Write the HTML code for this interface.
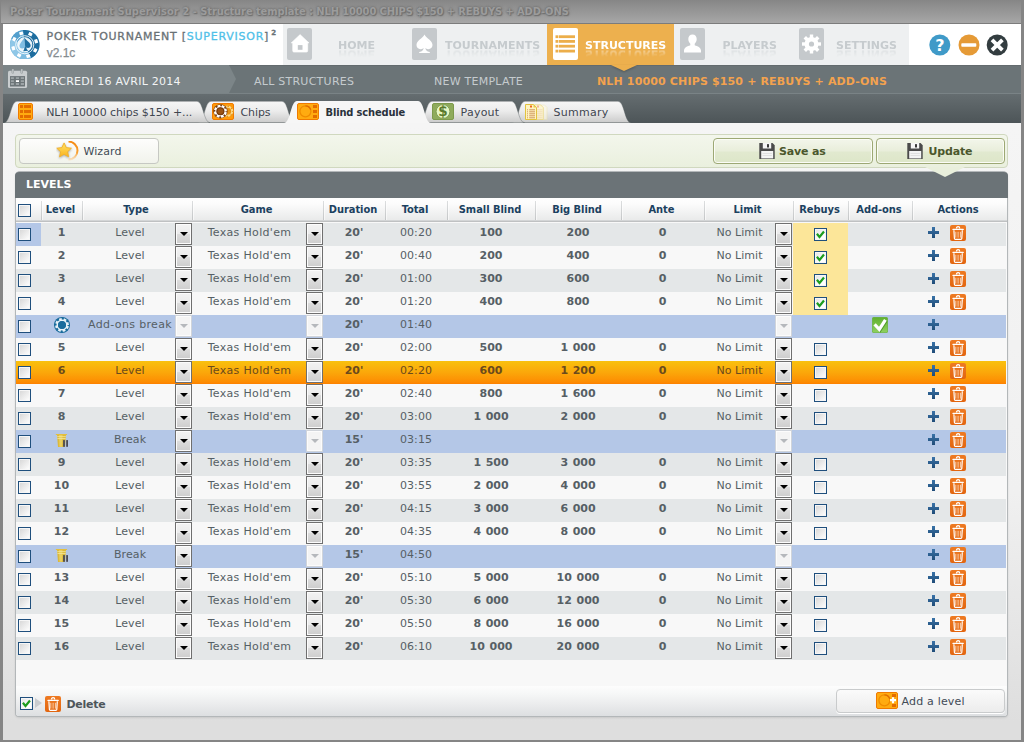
<!DOCTYPE html>
<html lang="fr">
<head>
<meta charset="utf-8">
<title>Poker Tournament Supervisor 2 - Structure template</title>
<style>
html,body{margin:0;padding:0}
body{width:1024px;height:742px;overflow:hidden;background:#8c8c8c;font-family:"DejaVu Sans","Liberation Sans",sans-serif;font-size:11px;color:#565f65}
#win{position:absolute;left:0;top:0;width:1024px;height:742px;background:#858585;overflow:hidden}
#win:before{content:"";position:absolute;left:3px;top:123px;width:1018px;height:617px;background:linear-gradient(#f5f5f5 0,#f0f0f0 60%,#dedede 97%)}
#titlebar{position:absolute;left:1px;top:0;width:1020px;height:23px;border-bottom:1px solid #7c7c7c;background:linear-gradient(#868686,#a7a7a7);border-radius:3px 3px 0 0}
#titlebar span{position:absolute;left:9px;top:4.500px;font-family:"DejaVu Sans Condensed","DejaVu Sans",sans-serif;font-weight:bold;font-size:11px;line-height:14px;color:#9c9c9c;white-space:pre;letter-spacing:-.08px;text-shadow:0 0 2px #6a6a6a,0 0 3px #757575,1px 1px 1px #707070}
#titlebar .t1{font-style:normal;letter-spacing:.12px}
#header{z-index:3;position:absolute;left:3px;top:24px;width:1018px;height:41px;background:#fff}
#logo{position:absolute;left:7px;top:5.800px;width:29.500px;height:29.500px}
#brand{position:absolute;left:43.500px;top:6px;font-size:11px;line-height:14px;letter-spacing:.76px;color:#697175;white-space:pre;-webkit-text-stroke:.3px #697175}
#brand .sup{color:#4fc0e8;-webkit-text-stroke:.3px #4fc0e8}
#brand .two{font-size:7px;position:relative;top:-5px;margin-left:2px;letter-spacing:0}
#ver{position:absolute;left:43.700px;top:22px;font-family:"Liberation Sans",sans-serif;font-size:12px;line-height:15px;color:#858c90;letter-spacing:0;-webkit-text-stroke:.25px #858c90}
#nav{position:absolute;left:280px;top:0;width:626px;height:41px;background:#eef0f1}
.nv{position:absolute;top:0;height:41px;width:110px}
.nv .ib{position:absolute;left:0;top:4px;width:25px;height:32px;border-radius:2px;background:#c5c9cc}
.nv .ib svg{display:block;width:25px;height:32px}
.nv .nt{position:absolute;top:15px;font-weight:bold;font-size:11px;line-height:14px;color:#c6cbce;white-space:pre;-webkit-box-reflect:below -6.500px linear-gradient(transparent 25%,rgba(255,255,255,.45) 78%)}
.nv.act{background:#edb04e}
.nv.act .ib{background:#fff}
.nv.act .nt{color:#fff}
.nv.act .arrow{position:absolute;left:64px;bottom:-6px;width:0;height:0;border:13px solid transparent;border-bottom:0;border-top:6px solid #edb04e;filter:drop-shadow(0 1px 1px rgba(0,0,0,.25))}
#winbtns{position:absolute;left:922.500px;top:7.500px;width:84px;height:26px}
#crumbs{position:absolute;left:3px;top:65px;width:1018px;height:28px;background:#6b7477;border-bottom:1px solid #7a8386;box-shadow:inset 0 1px 0 #636b6e}
#datecrumb{position:absolute;left:0;top:0;width:226px;height:28px;background:#7c8588}
#datecrumb:after{content:"";position:absolute;left:226px;top:0;border:solid transparent;border-width:14px 0 14px 7.700px;border-left-color:#7c8588}
#cal{position:absolute;left:5px;top:4px;width:20px;height:20px}
.cr{position:absolute;top:10px;font-size:11px;line-height:14px;color:#c5cbce;white-space:pre;letter-spacing:.25px}
.cr.date{color:#f2f4f5}
.cr.cur{color:#f3a24e;font-weight:bold;letter-spacing:.15px}
#tabbar{position:absolute;left:3px;top:94px;width:1018px;height:29px;background:linear-gradient(#656d70,#4d5558)}
#tabs{position:absolute;left:0;top:0}
.ti{position:absolute}
.tl{position:absolute;top:12px;font-size:11px;line-height:14px;color:#3f4650;white-space:pre;letter-spacing:-.08px}
.tl.act{font-family:"DejaVu Sans Condensed","DejaVu Sans",sans-serif;font-weight:bold;color:#2a323c;letter-spacing:-.15px;font-size:11px}
#content{position:absolute;left:0;top:123px;width:1024px;height:617px}
#toolbar{position:absolute;left:15px;top:11px;width:991px;height:32px;border:1px solid #d0d8bf;border-radius:4px;background:linear-gradient(#f3f6ec,#eaf0de)}
.btn{position:absolute;box-sizing:border-box;border-radius:3px;white-space:pre}
.btn.wiz{left:3px;top:3px;width:140px;height:26px;border-radius:4px;border:1px solid #c6c8c3;background:linear-gradient(#fdfdfc,#f1f3ec)}
.btn.wiz svg{position:absolute;left:36px;top:2px}
.btn.wiz span{position:absolute;left:63.400px;top:5.500px;line-height:14px;color:#424b56;letter-spacing:.13px}
.btn.grn{top:3px;height:26px;border:1px solid #9da874;border-radius:4px;box-shadow:inset 0 0 0 1px #fbfcf7;background:linear-gradient(#f3f6eb 0,#e9eedb 48%,#e1e9cf 56%,#dde6c8 100%)}
.btn.grn .fl{position:absolute;top:4px}
.btn.grn b{position:absolute;top:5.500px;line-height:14px;color:#4b572c;font-size:11px;letter-spacing:-.18px}
#toolbar .tbarrow{position:absolute;left:909px;top:32px;width:0;height:0;border:solid transparent;border-width:10px 20px 0 20px;border-top-color:#e9efdc;z-index:5}
#panel{position:absolute;left:16px;top:49px;width:991px;height:544px;background:#f8f8f8;border-radius:4px 4px 3px 3px;box-shadow:0 0 0 1px #b3b7b9,0 1px 3px rgba(0,0,0,.2)}
#ptitle{position:absolute;left:-1px;top:0;width:993px;height:26px;background:#6b7377;border-radius:4px 4px 0 0;color:#fff;font-weight:bold;font-size:11px;line-height:25px;text-indent:11px}
#thead{position:absolute;left:0;top:26px;width:991px;height:23px;background:linear-gradient(#fefefe 0,#fcfcfc 25%,#e8e9e9 100%);border-bottom:1px solid #bfc1c2;box-shadow:inset 0 -1px 0 #d3d5d6}
#thead .h{position:absolute;top:0;height:23px;line-height:24px;text-align:center;color:#1b4160;letter-spacing:-.03px;padding-right:2px;font-family:"DejaVu Sans Condensed","DejaVu Sans",sans-serif;font-size:11px;box-sizing:border-box;background:linear-gradient(#dcdedf,#c4c6c7) no-repeat 0 3px/1px 19px,linear-gradient(#fff,#f6f6f6) no-repeat 1px 3px/1px 19px}
.cb{position:absolute;box-sizing:border-box;width:13px;height:13px;border:1px solid #1f4f7d;background:linear-gradient(135deg,#dadada 12%,#fbfbfb 88%);box-shadow:inset 0 0 0 1px #f6f6f6}
.cb svg{position:absolute;left:-1px;top:-1px;width:13px;height:13px}
.hcb{left:2px;top:6px}
.row{position:absolute;left:0;width:990px;height:23px}
.row.odd{background:#e4e7e8}
.row.even{background:#f8f8f8}
.row.brk{background:#b4c7e7}
.row.sel{background:linear-gradient(#f9c10e 0,#fba70a 50%,#fd8c02 92%,#fd7f00 100%)}
.row .firstsel{position:absolute;left:0;top:0;width:25px;height:23px;background:#b4c7e7}
.row .rowcb{left:2px;top:5px}
.row .c{position:absolute;top:0;height:23px;line-height:19px;text-align:center;white-space:pre}
.row span.c{letter-spacing:.1px}
.row span.c.game{letter-spacing:.33px}
.row span.c.lim{letter-spacing:.03px}
.row b.c{word-spacing:.8px}
.row.sel .c{color:#6b4a1c}
.c.lvl{left:25px;width:41px}
.c.typ{left:66px;width:96px}
.c.game{left:177px;width:113px}
.c.dur{left:307px;width:62px}
.c.tot{left:369px;width:62px}
.c.sb{left:431px;width:88px}
.c.bb{left:519px;width:86px}
.c.ante{left:605px;width:83px}
.c.lim{left:688px;width:71px}
.lvlico{position:absolute;left:38px;top:2px;width:16px;height:16px}
.dd{position:absolute;top:0;width:17px;height:22px;box-sizing:border-box;border:1px solid #6f6f6f;background:linear-gradient(#f3f3f3 0,#ebebeb 48%,#dcdcdc 52%,#cdcdcd 100%);box-shadow:inset 0 0 0 1px #fcfcfc}
.dd i{position:absolute;left:3.500px;top:8px;width:0;height:0;border:solid transparent;border-width:4px 4px 0 4px;border-top-color:#000}
.dd.dis{border-color:#d0d4da;background:#f4f4f4}
.dd.dis i{border-top-color:#b5b8bc}
.reb{position:absolute;left:777px;top:0;width:55px;height:23px;background:#fce699}
.rebcb{left:798px;top:5px}
.addon{position:absolute;left:856px;top:2px;width:16px;height:16px}
.plus{position:absolute;left:912px;top:4px;width:12px;height:12px}
.trash{position:absolute;left:934px;top:2px;width:16px;height:16px}
#pfoot{position:absolute;left:0;top:500px;width:991px;height:44px;background:linear-gradient(#f8f8f8 0,#f8f8f8 13.500px,#fdfdfd 14px,#f6f7f7 22px,#eaebec 33px,#dddfe1 100%);border-radius:0 0 3px 3px}
.fcb{left:4px;top:25px}
#pfoot .tri{position:absolute;left:18.500px;top:26px;width:0;height:0;border:solid transparent;border-width:5px 0 5px 7px;border-left-color:#c9cccf}
.ftrash{position:absolute;left:29px;top:24px;width:16px;height:16px}
#pfoot .del{position:absolute;left:50.400px;top:25.500px;line-height:14px;color:#4e565b;font-size:11px;letter-spacing:-.23px}
.btn.add{left:819.500px;top:17px;width:169.500px;height:24px;border-radius:4px;border:1px solid #c9cbcc;background:linear-gradient(#fbfbfb,#ececec);box-shadow:0 1px 0 #fff}
.btn.add svg{position:absolute;left:39.500px;top:2px}
.btn.add span{position:absolute;left:65px;top:4.500px;line-height:14px;color:#424b56;letter-spacing:.19px}

.cb.on{background:linear-gradient(135deg,#e6e6e6 10%,#fff 70%)}

</style>
</head>
<body>
<svg width="0" height="0" style="position:absolute">
<defs>
<linearGradient id="g-orange" x1="0" y1="0" x2="0" y2="1"><stop offset="0" stop-color="#ee7a22"/><stop offset="1" stop-color="#e2650f"/></linearGradient>
<linearGradient id="g-blue" x1="0" y1="0" x2="0" y2="1"><stop offset="0" stop-color="#3a73a8"/><stop offset="1" stop-color="#1f4c78"/></linearGradient>
<linearGradient id="g-green" x1="0" y1="0" x2="0" y2="1"><stop offset="0" stop-color="#60b02c"/><stop offset="1" stop-color="#8fd162"/></linearGradient>
<symbol id="i-trash" viewBox="0 0 16 16">
<rect x="0" y="0" width="16" height="16" rx="2" fill="url(#g-orange)"/>
<path d="M6.500 3.400q0-1.700 1.600-1.700t1.600 1.700" fill="none" stroke="#fff" stroke-width="1.300"/>
<path d="M3 4.400h10.200" fill="none" stroke="#fff" stroke-width="1.300" stroke-linecap="round"/>
<path d="M3.900 5.300l.5 8.200q.05.900.9.900h5.600q.85 0 .9-.9l.5-8.200" fill="none" stroke="#fff" stroke-width="1.200" stroke-linejoin="round"/>
<path d="M5.800 6.800v5.900M8.100 6.800v5.900M10.400 6.800v5.900" stroke="#f9cfae" stroke-width="1" fill="none"/>
</symbol>
<symbol id="i-plus" viewBox="0 0 12 12">
<path d="M4 0h3v4h4v3h-4v4h-3v-4h-4v-3h4z" fill="url(#g-blue)"/>
</symbol>
<symbol id="i-tick" viewBox="0 0 13 13">
<path d="M2.900 5.700L5.500 8.900L10 3.500" fill="none" stroke="#1d9d1d" stroke-width="2.200"/>
</symbol>
<symbol id="i-greencheck" viewBox="0 0 16 16">
<rect x=".3" y=".3" width="15.400" height="15.400" rx="1.500" fill="url(#g-green)" stroke="#5cab2a" stroke-width=".6"/>
<path d="M3.400 8.200L8.100 13.200L14.200 3.700" fill="none" stroke="#3f8a1a" stroke-opacity=".7" stroke-width="3"/>
<path d="M2.600 7.400L7.300 12.400L13.400 2.900" fill="none" stroke="#fff" stroke-width="3.200"/>
</symbol>
<symbol id="i-chipblue" viewBox="0 0 16 16">
<circle cx="8" cy="8" r="8" fill="#176a9b"/>
<circle cx="8" cy="8" r="5.500" fill="none" stroke="#e9f2f8" stroke-width="3"/>
<circle cx="8" cy="8" r="6.500" fill="none" stroke="#176a9b" stroke-width="2.100" stroke-dasharray="2.200 2.905" stroke-dashoffset="1.100"/>
<circle cx="8" cy="8" r="3.800" fill="#1a6c9d"/>
</symbol>
<symbol id="i-floppy" viewBox="0 0 16 16">
<path d="M.3 0h13.200l2.200 2.200v13.800h-15.400z" fill="#4b4b4b"/>
<rect x="3.800" y="0" width="8.400" height="5.500" fill="#f6f6f6"/><rect x="8" y="1" width="2" height="3.500" rx=".6" fill="#3a3a3a"/>
<rect x="2.200" y="8" width="12" height="7.400" fill="#f4f4f4"/><path d="M3.500 10.500h9.400M3.500 12.500h9.400" stroke="#dcdcdc" stroke-width=".8"/>
</symbol>
<symbol id="i-break" viewBox="0 0 16 16">
<path d="M3 2.800h9l-1 12.200h-7z" fill="#dcb93a"/>
<path d="M5 3h3.500l-.4 11.800h-2.600z" fill="#ecd468" opacity=".8"/>
<path d="M3.200 4.600h8.600M3.400 6.500h8.300" stroke="#f3e69a" stroke-width=".8"/>
<path d="M2.300 2.450h10.300" stroke="#e3bf3e" stroke-width="1.100" stroke-linecap="round"/>
<rect x="9.100" y="8.100" width="1.800" height="6.700" fill="#4a4a54"/><rect x="12.200" y="8.100" width="1.800" height="6.700" fill="#4a4a54"/>
</symbol>
</defs>
</svg>

<div id="win">
<div id="titlebar"><span><i class="t1">Poker Tournament Supervisor 2</i> - Structure template : NLH 10000 CHIPS $150 + REBUYS + ADD-ONS</span></div>

<div id="header">
  <svg id="logo" viewBox="0 0 30 30"><circle cx="15" cy="15" r="15" fill="#5fa9d3"/><path d="M15 15L13.17 0.11A15 15 0 0 1 21.34 28.59z" fill="#1e6d9f"/><path d="M15 15L21.34 28.59A15 15 0 0 1 9.87 29.10z" fill="#7dbce1"/><path d="M15 15L9.87 29.10A15 15 0 0 1 1.41 8.66z" fill="#8fc7e7"/><path d="M15 15L1.41 8.66A15 15 0 0 1 13.17 0.11z" fill="#539fcd"/><rect x="-1.650" y="-1.900" width="3.300" height="3.800" rx=".4" fill="#fff" transform="translate(26.57 11.46) rotate(-17)"/><rect x="-1.650" y="-1.900" width="3.300" height="3.800" rx=".4" fill="#fff" transform="translate(25.68 20.68) rotate(28)"/><rect x="-1.650" y="-1.900" width="3.300" height="3.800" rx=".4" fill="#fff" transform="translate(18.54 26.57) rotate(73)"/><rect x="-1.650" y="-1.900" width="3.300" height="3.800" rx=".4" fill="#fff" transform="translate(9.32 25.68) rotate(118)"/><rect x="-1.650" y="-1.900" width="3.300" height="3.800" rx=".4" fill="#fff" transform="translate(3.43 18.54) rotate(163)"/><rect x="-1.650" y="-1.900" width="3.300" height="3.800" rx=".4" fill="#fff" transform="translate(4.32 9.32) rotate(208)"/><rect x="-1.650" y="-1.900" width="3.300" height="3.800" rx=".4" fill="#fff" transform="translate(11.46 3.43) rotate(253)"/><rect x="-1.650" y="-1.900" width="3.300" height="3.800" rx=".4" fill="#fff" transform="translate(20.68 4.32) rotate(298)"/><circle cx="15" cy="15" r="9.200" fill="none" stroke="#fff" stroke-width=".9"/><circle cx="15" cy="15" r="7.200" fill="#eaf5fb" stroke="#fff" stroke-width=".9"/><g transform="translate(15.200 14.600) scale(1.320) rotate(-6) translate(-14.600 -14)"><path d="M14.600 8.600c-1.300 2.400-4.300 4.200-4.300 6.500c0 1.700 1.900 2.500 3.500 1.500c.4-.25.600-.5.800-.8z" fill="#7fbde3"/><path d="M14.600 8.600c1.300 2.400 4.300 4.200 4.300 6.500c0 1.700-1.900 2.500-3.500 1.500c-.1.900.4 1.800 1.300 2.600h-4.200c.9-.8 1.400-1.700 1.300-2.600c.4-.25.600-.5.800-.8z" fill="#1e6d9f"/></g></svg>
  <div id="brand">POKER TOURNAMENT <span class="br">[</span><span class="sup">SUPERVISOR</span><span class="br">]</span><b class="two">2</b></div>
  <div id="ver">v2.1c</div>

  <div id="nav">
    <div class="nv" style="left:4px"><span class="ib"><svg viewBox="0 0 25 32"><path d="M13.100 6.600L22 14.900H20.700V22.800Q20.700 24.100 19.400 24.100H7Q5.700 24.100 5.700 22.800V14.900H4.200z" fill="#fff" stroke="#fff" stroke-width=".6" stroke-linejoin="round"/><rect x="10.800" y="17.100" width="4.700" height="4.700" fill="#c5c9cc"/></svg></span><span class="nt" style="left:51px">HOME</span></div>
    <div class="nv" style="left:129px"><span class="ib"><svg viewBox="0 0 25 32"><path d="M12.500 6.600C14.500 10.500 20.500 12.800 20.500 17.100C20.500 20.900 16.200 22.400 13.400 19.900C13.500 21.900 14.600 23.200 17.800 24V25H7.200V24C10.400 23.200 11.500 21.900 11.600 19.900C8.800 22.400 4.500 20.900 4.500 17.100C4.500 12.800 10.500 10.500 12.500 6.600z" fill="#fff"/></svg></span><span class="nt" style="left:33px">TOURNAMENTS</span></div>
    <div class="nv act" style="left:264px;width:127px"><span class="ib" style="left:6px"><svg viewBox="0 0 25 32"><g fill="#ecae4a"><rect x="2.500" y="7.3" width="2.500" height="2.800"/><rect x="5.600" y="7.3" width="16.400" height="2.800"/><rect x="2.500" y="12" width="2.500" height="2.800"/><rect x="5.600" y="12" width="16.400" height="2.800"/><rect x="2.500" y="16.8" width="2.500" height="2.800"/><rect x="5.600" y="16.8" width="16.400" height="2.800"/><rect x="2.500" y="21.7" width="2.500" height="2.800"/><rect x="5.600" y="21.7" width="16.400" height="2.800"/></g></svg></span><span class="nt" style="left:38px">STRUCTURES</span><i class="arrow"></i></div>
    <div class="nv" style="left:397px"><span class="ib"><svg viewBox="0 0 25 32"><path d="M12.500 6.500c2.600 0 4.200 1.900 4.200 4.500c0 2-0.900 3.800-2 4.700v1.600c3 1 6 2.200 6.300 5.200v2h-17v-2c.3-3 3.300-4.200 6.300-5.200v-1.600c-1.100-.9-2-2.700-2-4.700c0-2.600 1.600-4.500 4.200-4.500z" fill="#fff"/></svg></span><span class="nt" style="left:42.500px">PLAYERS</span></div>
    <div class="nv" style="left:516px"><span class="ib"><svg viewBox="0 0 25 32"><g transform="translate(12.500 16)"><circle r="5.200" fill="none" stroke="#fff" stroke-width="3.600"/><g stroke="#fff" stroke-width="3.400"><path d="M0-9.500V9.500"/><path d="M0-9.500V9.500" transform="rotate(45)"/><path d="M0-9.500V9.500" transform="rotate(90)"/><path d="M0-9.500V9.500" transform="rotate(135)"/></g><circle r="2.600" fill="#c5c9cc"/></g></svg></span><span class="nt" style="left:37px">SETTINGS</span></div>
  </div>

  <svg id="winbtns" viewBox="0 0 84 26">
    <circle cx="13.800" cy="13" r="10.500" fill="#3f9ac8"/><text x="13.800" y="18.800" text-anchor="middle" font-family="DejaVu Sans, sans-serif" font-weight="bold" font-size="16" fill="#fff">?</text>
    <circle cx="43" cy="13" r="10.500" fill="#e59a36"/><rect x="35.300" y="11.200" width="15" height="3.600" rx=".8" fill="#fff"/>
    <circle cx="71.200" cy="13" r="10.500" fill="#333d40"/><path d="M66 7.800l10.400 10.400M76.400 7.800l-10.400 10.400" stroke="#fff" stroke-width="3.800"/>
  </svg>
</div>

<div id="crumbs">
  <div id="datecrumb"></div>
  <svg id="cal" viewBox="0 0 20 20"><rect x="0" y="1.700" width="19.100" height="17.400" rx="1.600" fill="#c9cdcf"/><rect x="2" y="7.100" width="15" height="10.400" fill="#6d7578"/><rect x="2.9" y="8.2" width="3" height="1.8" fill="#9ca3a6"/><rect x="7.9" y="8.2" width="3.1" height="1.8" fill="#9ca3a6"/><rect x="12.8" y="8.2" width="3.2" height="1.8" fill="#9ca3a6"/><rect x="2.9" y="11.2" width="3" height="1.8" fill="#9ca3a6"/><rect x="7.9" y="11.2" width="3.1" height="1.8" fill="#fff"/><rect x="12.8" y="11.2" width="3.2" height="1.8" fill="#9ca3a6"/><rect x="2.9" y="14" width="3" height="2" fill="#9ca3a6"/><rect x="7.9" y="14" width="3.1" height="2" fill="#9ca3a6"/><rect x="12.8" y="14" width="3.2" height="2" fill="#9ca3a6"/><rect x="3.600" y="0" width="2.400" height="4.600" rx="1.100" fill="#8e9598"/><rect x="12.500" y="0" width="2.400" height="4.600" rx="1.100" fill="#8e9598"/><rect x="4.200" y="0" width="1.300" height="4" rx=".6" fill="#c3c8ca"/><rect x="13.100" y="0" width="1.300" height="4" rx=".6" fill="#c3c8ca"/></svg>
  <span class="cr date" style="left:31px">MERCREDI 16 AVRIL 2014</span>
  <span class="cr" style="left:251px">ALL STRUCTURES</span>
  <span class="cr" style="left:431px">NEW TEMPLATE</span>
  <span class="cr cur" style="left:594px">NLH 10000 CHIPS $150 + REBUYS + ADD-ONS</span>
</div>

<div id="tabbar">
  <svg id="tabs" width="1018" height="29" viewBox="0 0 1018 29"><defs><linearGradient id="tg" x1="0" y1="0" x2="0" y2="1"><stop offset="0" stop-color="#f6f6f6"/><stop offset=".45" stop-color="#ececec"/><stop offset="1" stop-color="#cbcbcb"/></linearGradient></defs><path d="M509 28.7C515.5 28.7 515.5 7.3 522 7.3H615C621.5 7.3 621.5 28.7 628 28.7V28.7H509z" fill="url(#tg)" stroke="#5a6265" stroke-opacity=".55" stroke-width=".7"/><path d="M416 28.7C422.5 28.7 422.5 7.3 429 7.3H508.5C515 7.3 515 28.7 521.5 28.7V28.7H416z" fill="url(#tg)" stroke="#5a6265" stroke-opacity=".55" stroke-width=".7"/><path d="M195 28.7C201.5 28.7 201.5 7.3 208 7.3H279C285.5 7.3 285.5 28.7 292 28.7V28.7H195z" fill="url(#tg)" stroke="#5a6265" stroke-opacity=".55" stroke-width=".7"/><path d="M1 28.7C7.5 28.7 7.5 7.3 14 7.3H194C200.5 7.3 200.5 28.7 207 28.7V28.7H1z" fill="url(#tg)" stroke="#5a6265" stroke-opacity=".55" stroke-width=".7"/><path d="M281 29C287.5 29 287.5 7 294 7H415C421.5 7 421.5 29 428 29V30H281z" fill="#f6f6f6"/></svg>
  <svg class="ti" style="left:15px;top:9px" width="15" height="17" viewBox="0 0 15 17"><rect x=".5" y=".5" width="14" height="16" rx="1.500" fill="#ffab10" stroke="#f07a00"/><g fill="#e36c00"><rect x="2" y="2" width="3" height="3"/><rect x="6" y="2" width="7" height="3"/><rect x="2" y="7" width="3" height="3"/><rect x="6" y="7" width="7" height="3"/><rect x="2" y="12" width="3" height="3"/><rect x="6" y="12" width="7" height="3"/></g></svg>
  <span class="tl" style="left:43.200px">NLH 10000 chips $150 +...</span>
  <svg class="ti" style="left:209px;top:9px" width="22" height="17" viewBox="0 0 22 17"><rect x=".5" y=".5" width="21" height="16" rx="1.500" fill="#ff9a0a" stroke="#f07a00"/><circle cx="15.600" cy="8.300" r="6" fill="#e8900e"/><circle cx="15.600" cy="8.300" r="4.600" fill="none" stroke="#fcd88a" stroke-width="2.200"/><circle cx="15.600" cy="8.300" r="5.100" fill="none" stroke="#e8900e" stroke-width="1.500" stroke-dasharray="1.500 2.505" stroke-dashoffset=".75"/><circle cx="8.400" cy="8.300" r="7.100" fill="#7a3d0c"/><circle cx="8.400" cy="8.300" r="5.300" fill="none" stroke="#fff" stroke-width="2.500"/><circle cx="8.400" cy="8.300" r="5.900" fill="none" stroke="#7a3d0c" stroke-width="1.700" stroke-dasharray="1.700 2.934" stroke-dashoffset=".85"/><circle cx="8.400" cy="8.300" r="3.400" fill="#9a5416" stroke="#6e350a" stroke-width=".8"/></svg>
  <span class="tl" style="left:237.500px">Chips</span>
  <svg class="ti" style="left:294px;top:9px" width="22" height="17" viewBox="0 0 22 17"><rect x=".5" y=".5" width="21" height="16" rx="1.500" fill="#ffab10" stroke="#f07a00"/><circle cx="8.400" cy="8.300" r="5.500" fill="#ffab10" stroke="#f08c00" stroke-width="1.300"/><path d="M8.400 2.800A5.500 5.500 0 0 1 13.700 6.800" fill="none" stroke="#e06c00" stroke-width="1.300"/><g fill="#e36c00"><rect x="16" y="2" width="4" height="3"/><rect x="16" y="7" width="4" height="3"/><rect x="16" y="12" width="4" height="3"/></g></svg>
  <span class="tl act" style="left:322.600px">Blind schedule</span>
  <svg class="ti" style="left:429px;top:9px" width="22" height="17" viewBox="0 0 22 17"><rect x=".5" y=".5" width="21" height="16" rx="1.500" fill="#8fab5c" stroke="#7d9a4c"/><circle cx="11" cy="8.500" r="6.900" fill="#e6f7c4" stroke="#7d9a4c" stroke-width=".9"/><text x="11" y="13.300" text-anchor="middle" font-family="DejaVu Sans, sans-serif" font-weight="bold" font-size="13.500" fill="#5a7a2c">$</text></svg>
  <span class="tl" style="left:457.500px;letter-spacing:.25px">Payout</span>
  <svg class="ti" style="left:522px;top:10px" width="24" height="16" viewBox="0 0 24 16"><path d="M15.500 1h4l2.500 2.500v12h-6.500z" fill="#fffbe6" stroke="#f1e6a8" stroke-width=".8" opacity=".55"/><path d="M9.500 .8h6l2.800 2.800v11.900h-8.800z" fill="#fff7cf" stroke="#ead784" stroke-width=".9" opacity=".85"/><path d="M12 5.800h5.500M12 7.800h5.500M12 9.800h5.500M12 11.800h5.500M12 13.800h5.500" stroke="#ecd3b0" stroke-width=".8"/><rect x="12" y="1.500" width="2" height="2" fill="#f3b29c"/><path d="M.5.500h8l3 3v12h-11z" fill="#fff4c0" stroke="#e2c23e"/><path d="M8.500.5v3h3z" fill="#e6c94e"/><g stroke="#cf9660" stroke-width="1"><path d="M2 5.800h1M2 7.800h1M2 9.800h1M2 11.800h1M2 13.800h1M4.200 5.800h5.800M4.200 7.800h5.800M4.200 9.800h5.800M4.200 11.800h5.800M4.200 13.800h5.800"/></g><rect x="5" y="1.500" width="2" height="2" fill="#ee6820"/></svg>
  <span class="tl" style="left:550.500px;letter-spacing:.28px">Summary</span>
</div>

<div id="content">
  <div id="toolbar">
    <div class="btn wiz"><svg width="24" height="20" viewBox="0 0 24 20"><defs><linearGradient id="sg" x1="0" y1="0" x2="0" y2="1"><stop offset="0" stop-color="#ffe468"/><stop offset="1" stop-color="#fbb21c"/></linearGradient><linearGradient id="ag" x1="0" y1="0" x2="0" y2="1"><stop offset="0" stop-color="#f58a12"/><stop offset=".6" stop-color="#f7a030"/><stop offset="1" stop-color="#fbc98a" stop-opacity=".5"/></linearGradient></defs><path d="M12.500 .6A9 9 0 0 1 12.500 18.600" fill="none" stroke="url(#ag)" stroke-width="2"/><path d="M8.10 1.90L10.27 6.61L15.42 7.22L11.62 10.74L12.63 15.83L8.10 13.30L3.57 15.83L4.58 10.74L0.78 7.22L5.93 6.61z" fill="url(#sg)" stroke="#f0b02a" stroke-width=".9" stroke-linejoin="round" style="filter:drop-shadow(0 1px 1px rgba(0,0,0,.3))"/></svg><span>Wizard</span></div>
    <div class="btn grn" style="left:697px;width:160px"><svg class="fl" style="left:45px" width="16" height="16" viewBox="0 0 16 16"><use href="#i-floppy"/></svg><b style="left:65px">Save as</b></div>
    <div class="btn grn" style="left:859.500px;width:129.500px"><svg class="fl" style="left:30.500px" width="16" height="16" viewBox="0 0 16 16"><use href="#i-floppy"/></svg><b style="left:52px">Update</b></div>
    <i class="tbarrow"></i>
  </div>

  <div id="panel">
    <div id="ptitle">LEVELS</div>
    <div id="thead">
      <span class="cb hcb"></span>
      <b class="h" style="left:25px;width:41px">Level</b>
      <b class="h" style="left:66px;width:110px">Type</b>
      <b class="h" style="left:176px;width:131px">Game</b>
      <b class="h" style="left:307px;width:62px">Duration</b>
      <b class="h" style="left:369px;width:62px">Total</b>
      <b class="h" style="left:431px;width:88px">Small Blind</b>
      <b class="h" style="left:519px;width:86px">Big Blind</b>
      <b class="h" style="left:605px;width:83px">Ante</b>
      <b class="h" style="left:688px;width:89px">Limit</b>
      <b class="h" style="left:777px;width:55px">Rebuys</b>
      <b class="h" style="left:832px;width:64px">Add-ons</b>
      <b class="h" style="left:896px;width:94px">Actions</b>
    </div>
<div class="row odd" style="top:51px"><span class="firstsel"></span><span class="cb rowcb"></span><b class="c lvl">1</b><span class="c typ">Level</span><span class="dd" style="left:159px"><i></i></span><span class="c game">Texas Hold'em</span><span class="dd" style="left:290px"><i></i></span><b class="c dur">20'</b><span class="c tot">00:20</span><b class="c sb">100</b><b class="c bb">200</b><b class="c ante">0</b><span class="c lim">No Limit</span><span class="dd" style="left:759px"><i></i></span><span class="reb"></span><span class="cb rebcb on"><svg viewBox="0 0 13 13"><use href="#i-tick"/></svg></span><svg class="plus" viewBox="0 0 12 12"><use href="#i-plus"/></svg><svg class="trash" viewBox="0 0 16 16"><use href="#i-trash"/></svg></div>
<div class="row even" style="top:74px"><span class="cb rowcb"></span><b class="c lvl">2</b><span class="c typ">Level</span><span class="dd" style="left:159px"><i></i></span><span class="c game">Texas Hold'em</span><span class="dd" style="left:290px"><i></i></span><b class="c dur">20'</b><span class="c tot">00:40</span><b class="c sb">200</b><b class="c bb">400</b><b class="c ante">0</b><span class="c lim">No Limit</span><span class="dd" style="left:759px"><i></i></span><span class="reb"></span><span class="cb rebcb on"><svg viewBox="0 0 13 13"><use href="#i-tick"/></svg></span><svg class="plus" viewBox="0 0 12 12"><use href="#i-plus"/></svg><svg class="trash" viewBox="0 0 16 16"><use href="#i-trash"/></svg></div>
<div class="row odd" style="top:97px"><span class="cb rowcb"></span><b class="c lvl">3</b><span class="c typ">Level</span><span class="dd" style="left:159px"><i></i></span><span class="c game">Texas Hold'em</span><span class="dd" style="left:290px"><i></i></span><b class="c dur">20'</b><span class="c tot">01:00</span><b class="c sb">300</b><b class="c bb">600</b><b class="c ante">0</b><span class="c lim">No Limit</span><span class="dd" style="left:759px"><i></i></span><span class="reb"></span><span class="cb rebcb on"><svg viewBox="0 0 13 13"><use href="#i-tick"/></svg></span><svg class="plus" viewBox="0 0 12 12"><use href="#i-plus"/></svg><svg class="trash" viewBox="0 0 16 16"><use href="#i-trash"/></svg></div>
<div class="row even" style="top:120px"><span class="cb rowcb"></span><b class="c lvl">4</b><span class="c typ">Level</span><span class="dd" style="left:159px"><i></i></span><span class="c game">Texas Hold'em</span><span class="dd" style="left:290px"><i></i></span><b class="c dur">20'</b><span class="c tot">01:20</span><b class="c sb">400</b><b class="c bb">800</b><b class="c ante">0</b><span class="c lim">No Limit</span><span class="dd" style="left:759px"><i></i></span><span class="reb"></span><span class="cb rebcb on"><svg viewBox="0 0 13 13"><use href="#i-tick"/></svg></span><svg class="plus" viewBox="0 0 12 12"><use href="#i-plus"/></svg><svg class="trash" viewBox="0 0 16 16"><use href="#i-trash"/></svg></div>
<div class="row odd brk" style="top:143px"><span class="cb rowcb"></span><svg class="lvlico" style="top:1.700px" viewBox="0 0 16 16"><use href="#i-chipblue"/></svg><span class="c typ" style="letter-spacing:.35px">Add-ons break</span><span class="dd dis" style="left:159px"><i></i></span><span class="dd dis" style="left:290px"><i></i></span><b class="c dur">20'</b><span class="c tot">01:40</span><span class="dd dis" style="left:759px"><i></i></span><svg class="addon" viewBox="0 0 16 16"><use href="#i-greencheck"/></svg><svg class="plus" viewBox="0 0 12 12"><use href="#i-plus"/></svg></div>
<div class="row even" style="top:166px"><span class="cb rowcb"></span><b class="c lvl">5</b><span class="c typ">Level</span><span class="dd" style="left:159px"><i></i></span><span class="c game">Texas Hold'em</span><span class="dd" style="left:290px"><i></i></span><b class="c dur">20'</b><span class="c tot">02:00</span><b class="c sb">500</b><b class="c bb">1 000</b><b class="c ante">0</b><span class="c lim">No Limit</span><span class="dd" style="left:759px"><i></i></span><span class="cb rebcb"></span><svg class="plus" viewBox="0 0 12 12"><use href="#i-plus"/></svg><svg class="trash" viewBox="0 0 16 16"><use href="#i-trash"/></svg></div>
<div class="row odd sel" style="top:189px"><span class="cb rowcb"></span><b class="c lvl">6</b><span class="c typ">Level</span><span class="dd" style="left:159px"><i></i></span><span class="c game">Texas Hold'em</span><span class="dd" style="left:290px"><i></i></span><b class="c dur">20'</b><span class="c tot">02:20</span><b class="c sb">600</b><b class="c bb">1 200</b><b class="c ante">0</b><span class="c lim">No Limit</span><span class="dd" style="left:759px"><i></i></span><span class="cb rebcb"></span><svg class="plus" viewBox="0 0 12 12"><use href="#i-plus"/></svg><svg class="trash" viewBox="0 0 16 16"><use href="#i-trash"/></svg></div>
<div class="row even" style="top:212px"><span class="cb rowcb"></span><b class="c lvl">7</b><span class="c typ">Level</span><span class="dd" style="left:159px"><i></i></span><span class="c game">Texas Hold'em</span><span class="dd" style="left:290px"><i></i></span><b class="c dur">20'</b><span class="c tot">02:40</span><b class="c sb">800</b><b class="c bb">1 600</b><b class="c ante">0</b><span class="c lim">No Limit</span><span class="dd" style="left:759px"><i></i></span><span class="cb rebcb"></span><svg class="plus" viewBox="0 0 12 12"><use href="#i-plus"/></svg><svg class="trash" viewBox="0 0 16 16"><use href="#i-trash"/></svg></div>
<div class="row odd" style="top:235px"><span class="cb rowcb"></span><b class="c lvl">8</b><span class="c typ">Level</span><span class="dd" style="left:159px"><i></i></span><span class="c game">Texas Hold'em</span><span class="dd" style="left:290px"><i></i></span><b class="c dur">20'</b><span class="c tot">03:00</span><b class="c sb">1 000</b><b class="c bb">2 000</b><b class="c ante">0</b><span class="c lim">No Limit</span><span class="dd" style="left:759px"><i></i></span><span class="cb rebcb"></span><svg class="plus" viewBox="0 0 12 12"><use href="#i-plus"/></svg><svg class="trash" viewBox="0 0 16 16"><use href="#i-trash"/></svg></div>
<div class="row even brk" style="top:258px"><span class="cb rowcb"></span><svg class="lvlico" viewBox="0 0 16 16"><use href="#i-break"/></svg><span class="c typ">Break</span><span class="dd" style="left:159px"><i></i></span><span class="dd dis" style="left:290px"><i></i></span><b class="c dur">15'</b><span class="c tot">03:15</span><span class="dd dis" style="left:759px"><i></i></span><svg class="plus" viewBox="0 0 12 12"><use href="#i-plus"/></svg><svg class="trash" viewBox="0 0 16 16"><use href="#i-trash"/></svg></div>
<div class="row odd" style="top:281px"><span class="cb rowcb"></span><b class="c lvl">9</b><span class="c typ">Level</span><span class="dd" style="left:159px"><i></i></span><span class="c game">Texas Hold'em</span><span class="dd" style="left:290px"><i></i></span><b class="c dur">20'</b><span class="c tot">03:35</span><b class="c sb">1 500</b><b class="c bb">3 000</b><b class="c ante">0</b><span class="c lim">No Limit</span><span class="dd" style="left:759px"><i></i></span><span class="cb rebcb"></span><svg class="plus" viewBox="0 0 12 12"><use href="#i-plus"/></svg><svg class="trash" viewBox="0 0 16 16"><use href="#i-trash"/></svg></div>
<div class="row even" style="top:304px"><span class="cb rowcb"></span><b class="c lvl">10</b><span class="c typ">Level</span><span class="dd" style="left:159px"><i></i></span><span class="c game">Texas Hold'em</span><span class="dd" style="left:290px"><i></i></span><b class="c dur">20'</b><span class="c tot">03:55</span><b class="c sb">2 000</b><b class="c bb">4 000</b><b class="c ante">0</b><span class="c lim">No Limit</span><span class="dd" style="left:759px"><i></i></span><span class="cb rebcb"></span><svg class="plus" viewBox="0 0 12 12"><use href="#i-plus"/></svg><svg class="trash" viewBox="0 0 16 16"><use href="#i-trash"/></svg></div>
<div class="row odd" style="top:327px"><span class="cb rowcb"></span><b class="c lvl">11</b><span class="c typ">Level</span><span class="dd" style="left:159px"><i></i></span><span class="c game">Texas Hold'em</span><span class="dd" style="left:290px"><i></i></span><b class="c dur">20'</b><span class="c tot">04:15</span><b class="c sb">3 000</b><b class="c bb">6 000</b><b class="c ante">0</b><span class="c lim">No Limit</span><span class="dd" style="left:759px"><i></i></span><span class="cb rebcb"></span><svg class="plus" viewBox="0 0 12 12"><use href="#i-plus"/></svg><svg class="trash" viewBox="0 0 16 16"><use href="#i-trash"/></svg></div>
<div class="row even" style="top:350px"><span class="cb rowcb"></span><b class="c lvl">12</b><span class="c typ">Level</span><span class="dd" style="left:159px"><i></i></span><span class="c game">Texas Hold'em</span><span class="dd" style="left:290px"><i></i></span><b class="c dur">20'</b><span class="c tot">04:35</span><b class="c sb">4 000</b><b class="c bb">8 000</b><b class="c ante">0</b><span class="c lim">No Limit</span><span class="dd" style="left:759px"><i></i></span><span class="cb rebcb"></span><svg class="plus" viewBox="0 0 12 12"><use href="#i-plus"/></svg><svg class="trash" viewBox="0 0 16 16"><use href="#i-trash"/></svg></div>
<div class="row odd brk" style="top:373px"><span class="cb rowcb"></span><svg class="lvlico" viewBox="0 0 16 16"><use href="#i-break"/></svg><span class="c typ">Break</span><span class="dd" style="left:159px"><i></i></span><span class="dd dis" style="left:290px"><i></i></span><b class="c dur">15'</b><span class="c tot">04:50</span><span class="dd dis" style="left:759px"><i></i></span><svg class="plus" viewBox="0 0 12 12"><use href="#i-plus"/></svg><svg class="trash" viewBox="0 0 16 16"><use href="#i-trash"/></svg></div>
<div class="row even" style="top:396px"><span class="cb rowcb"></span><b class="c lvl">13</b><span class="c typ">Level</span><span class="dd" style="left:159px"><i></i></span><span class="c game">Texas Hold'em</span><span class="dd" style="left:290px"><i></i></span><b class="c dur">20'</b><span class="c tot">05:10</span><b class="c sb">5 000</b><b class="c bb">10 000</b><b class="c ante">0</b><span class="c lim">No Limit</span><span class="dd" style="left:759px"><i></i></span><span class="cb rebcb"></span><svg class="plus" viewBox="0 0 12 12"><use href="#i-plus"/></svg><svg class="trash" viewBox="0 0 16 16"><use href="#i-trash"/></svg></div>
<div class="row odd" style="top:419px"><span class="cb rowcb"></span><b class="c lvl">14</b><span class="c typ">Level</span><span class="dd" style="left:159px"><i></i></span><span class="c game">Texas Hold'em</span><span class="dd" style="left:290px"><i></i></span><b class="c dur">20'</b><span class="c tot">05:30</span><b class="c sb">6 000</b><b class="c bb">12 000</b><b class="c ante">0</b><span class="c lim">No Limit</span><span class="dd" style="left:759px"><i></i></span><span class="cb rebcb"></span><svg class="plus" viewBox="0 0 12 12"><use href="#i-plus"/></svg><svg class="trash" viewBox="0 0 16 16"><use href="#i-trash"/></svg></div>
<div class="row even" style="top:442px"><span class="cb rowcb"></span><b class="c lvl">15</b><span class="c typ">Level</span><span class="dd" style="left:159px"><i></i></span><span class="c game">Texas Hold'em</span><span class="dd" style="left:290px"><i></i></span><b class="c dur">20'</b><span class="c tot">05:50</span><b class="c sb">8 000</b><b class="c bb">16 000</b><b class="c ante">0</b><span class="c lim">No Limit</span><span class="dd" style="left:759px"><i></i></span><span class="cb rebcb"></span><svg class="plus" viewBox="0 0 12 12"><use href="#i-plus"/></svg><svg class="trash" viewBox="0 0 16 16"><use href="#i-trash"/></svg></div>
<div class="row odd" style="top:465px"><span class="cb rowcb"></span><b class="c lvl">16</b><span class="c typ">Level</span><span class="dd" style="left:159px"><i></i></span><span class="c game">Texas Hold'em</span><span class="dd" style="left:290px"><i></i></span><b class="c dur">20'</b><span class="c tot">06:10</span><b class="c sb">10 000</b><b class="c bb">20 000</b><b class="c ante">0</b><span class="c lim">No Limit</span><span class="dd" style="left:759px"><i></i></span><span class="cb rebcb"></span><svg class="plus" viewBox="0 0 12 12"><use href="#i-plus"/></svg><svg class="trash" viewBox="0 0 16 16"><use href="#i-trash"/></svg></div>
    <div id="pfoot">
      <span class="cb fcb on"><svg viewBox="0 0 13 13"><use href="#i-tick"/></svg></span>
      <i class="tri"></i>
      <svg class="ftrash" viewBox="0 0 16 16"><use href="#i-trash"/></svg>
      <b class="del">Delete</b>
      <div class="btn add"><svg width="22" height="17" viewBox="0 0 22 17"><rect x=".5" y=".5" width="21" height="16" rx="1.500" fill="#ffab10" stroke="#f07a00"/><circle cx="8.400" cy="8.300" r="5.500" fill="#ffab10" stroke="#f08c00" stroke-width="1.300"/><path d="M8.400 2.800A5.500 5.500 0 0 1 13.700 6.800" fill="none" stroke="#e06c00" stroke-width="1.300"/><g fill="#e36c00"><rect x="16" y="2" width="4" height="3"/><rect x="16" y="12" width="4" height="3"/></g><path d="M17 5.200v6M14 8.200h6" stroke="#fff" stroke-width="2.200"/></svg><span>Add a level</span></div>
    </div>
  </div>
</div>
</div>
</body>
</html>
